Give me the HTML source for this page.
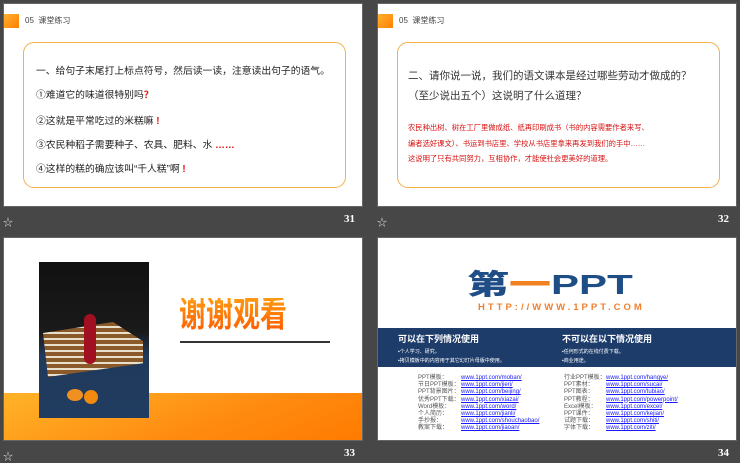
<!DOCTYPE html>
<html><head><meta charset="utf-8"><style>
*{margin:0;padding:0;box-sizing:border-box}
body{width:740px;height:461px;background:#474747;position:relative;overflow:hidden;font-family:"Liberation Sans","Noto Sans CJK SC",sans-serif}
.s{position:absolute;background:#fff;overflow:hidden;border:1px solid #666}
.a{position:absolute;white-space:nowrap}
.sq{position:absolute;left:0;top:10px;width:15px;height:14px;background:linear-gradient(135deg,#ffb030,#ff8000)}
.hd{position:absolute;left:21px;top:11px;font-size:8px;color:#444}
.box{position:absolute;border:1px solid #f5b04a;border-radius:11px}
.lbl{position:absolute;color:#fff;font-size:11px;font-weight:bold;font-family:"Liberation Serif",serif}
.st{position:absolute;color:#ddd;font-size:10px}
.r{color:#e01010;font-weight:bold}
.lk{font-size:6px;color:#555;line-height:7.2px}
.lk u{color:#1a1aff}
</style></head><body>
<div class="s" style="left:3px;top:3px;width:360px;height:204px">
<div class="sq"></div><div class="hd">05&nbsp; 课堂练习</div>
<div class="box" style="left:19px;top:38px;width:323px;height:146px"></div>
<div class="a" style="left:32px;top:59px;font-size:9.8px;color:#222">一、给句子末尾打上标点符号，然后读一读，注意读出句子的语气。</div>
<div class="a" style="left:32px;top:83px;font-size:9.8px;color:#222">①难道它的味道很特别吗<span class="r">？</span></div>
<div class="a" style="left:32px;top:109px;font-size:9.8px;color:#222">②这就是平常吃过的米糕嘛 <span class="r">!</span></div>
<div class="a" style="left:32px;top:133px;font-size:9.8px;color:#222">③农民种稻子需要种子、农具、肥料、水 <span class="r">……</span></div>
<div class="a" style="left:32px;top:157px;font-size:9.8px;color:#222">④这样的糕的确应该叫“千人糕”啊 <span class="r">!</span></div>
</div>
<div class="lbl" style="left:344px;top:213px">31</div><div class="st" style="left:3px;top:214px">☆</div>

<div class="s" style="left:377px;top:3px;width:360px;height:204px">
<div class="sq"></div><div class="hd">05&nbsp; 课堂练习</div>
<div class="box" style="left:19px;top:38px;width:323px;height:146px"></div>
<div class="a" style="left:30px;top:64px;font-size:10.5px;color:#333">二、请你说一说，我们的语文课本是经过哪些劳动才做成的？</div>
<div class="a" style="left:30px;top:84px;font-size:10.5px;color:#333">（至少说出五个）这说明了什么道理？</div>
<div class="a" style="left:30px;top:119px;font-size:7.3px;color:#d81010">农民种出树、树在工厂里做成纸、纸再印刷成书（书的内容需要作者来写、</div>
<div class="a" style="left:30px;top:135px;font-size:7.3px;color:#d81010">编者选好课文）、书运到书店里、学校从书店里拿来再发到我们的手中……</div>
<div class="a" style="left:30px;top:150px;font-size:7.3px;color:#d81010">这说明了只有共同努力，互相协作，才能使社会更美好的道理。</div>
</div>
<div class="lbl" style="left:718px;top:213px">32</div><div class="st" style="left:377px;top:214px">☆</div>

<div class="s" style="left:3px;top:237px;width:360px;height:204px">
<div style="position:absolute;left:0;top:155px;width:360px;height:49px;background:linear-gradient(160deg,#ffb428,#ff8a10 60%,#ff7a00)"></div>
<div style="position:absolute;left:35px;top:24px;width:110px;height:156px;background:linear-gradient(#111 0%,#1a1a1a 45%,#1f3a5c 60%,#203c60 100%)">
<div style="position:absolute;left:4px;top:60px;width:100px;height:55px;background:repeating-linear-gradient(#8a5a2a 0 4px,#e8e0cc 4px 6px);clip-path:polygon(0 20%,70% 0,100% 35%,100% 75%,5% 100%)"></div>
<div style="position:absolute;left:45px;top:52px;width:12px;height:50px;background:#a01020;border-radius:6px"></div>
<div style="position:absolute;left:28px;top:127px;width:16px;height:12px;background:#f09020;border-radius:50%"></div>
<div style="position:absolute;left:45px;top:128px;width:14px;height:14px;background:#f08a10;border-radius:50%"></div>
</div>
<div class="a" style="left:175px;top:60px;font-size:27px;line-height:27px;font-weight:bold;transform:scaleY(1.3);transform-origin:0 0;background:linear-gradient(#ff9a10,#ff5a00);-webkit-background-clip:text;color:transparent">谢谢观看</div>
<div style="position:absolute;left:176px;top:103px;width:150px;height:2px;background:#333"></div>
</div>
<div class="lbl" style="left:344px;top:447px">33</div><div class="st" style="left:3px;top:448px">☆</div>

<div class="s" style="left:377px;top:237px;width:360px;height:204px">
<div class="a" style="left:89px;top:33px;font-size:28px;line-height:28px;font-weight:900;color:#1f4e86;transform:scaleX(1.5);transform-origin:0 0">第<span style="color:#f08020">一</span>PPT</div>
<div class="a" style="left:100px;top:64px;font-size:9.5px;font-weight:bold;color:#f08030;letter-spacing:3px">HTTP://WWW.1PPT.COM</div>
<div style="position:absolute;left:0;top:90px;width:360px;height:39px;background:#1d3c6a"></div>
<div class="a" style="left:20px;top:94px;font-size:9px;font-weight:bold;color:#fff">可以在下列情况使用</div>
<div class="a" style="left:20px;top:110px;font-size:5px;color:#fff">▪个人学习、研究。</div>
<div class="a" style="left:20px;top:119px;font-size:5px;color:#fff">▪拷贝模板中的内容用于其它幻灯片母版中使用。</div>
<div class="a" style="left:184px;top:94px;font-size:9px;font-weight:bold;color:#fff">不可以在以下情况使用</div>
<div class="a" style="left:184px;top:110px;font-size:5px;color:#fff">▪任何形式的在线付费下载。</div>
<div class="a" style="left:184px;top:119px;font-size:5px;color:#fff">▪商业用途。</div>
<div class="a lk" style="left:40px;top:137px">PPT模板：<br>节日PPT模板：<br>PPT背景图片：<br>优秀PPT下载：<br>Word模板：<br>个人简历：<br>手抄报：<br>教案下载：</div>
<div class="a lk" style="left:83px;top:137px"><u>www.1ppt.com/moban/</u><br><u>www.1ppt.com/jieri/</u><br><u>www.1ppt.com/beijing/</u><br><u>www.1ppt.com/xiazai/</u><br><u>www.1ppt.com/word/</u><br><u>www.1ppt.com/jianli/</u><br><u>www.1ppt.com/shouchaobao/</u><br><u>www.1ppt.com/jiaoan/</u></div>
<div class="a lk" style="left:186px;top:137px">行业PPT模板：<br>PPT素材：<br>PPT图表：<br>PPT教程：<br>Excel模板：<br>PPT课件：<br>试题下载：<br>字体下载：</div>
<div class="a lk" style="left:228px;top:137px"><u>www.1ppt.com/hangye/</u><br><u>www.1ppt.com/sucai/</u><br><u>www.1ppt.com/tubiao/</u><br><u>www.1ppt.com/powerpoint/</u><br><u>www.1ppt.com/excel/</u><br><u>www.1ppt.com/kejian/</u><br><u>www.1ppt.com/shiti/</u><br><u>www.1ppt.com/ziti/</u></div>
</div>
<div class="lbl" style="left:718px;top:447px">34</div>
</body></html>
